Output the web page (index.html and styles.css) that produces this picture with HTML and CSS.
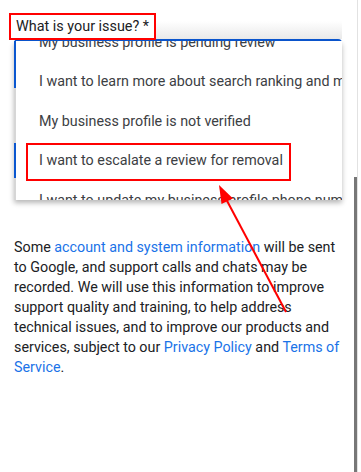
FILE: index.html
```html
<!DOCTYPE html>
<html lang="en">
<head>
    <meta charset="UTF-8">
    <meta name="viewport" content="width=device-width, initial-scale=1.0">
    <title>What is your issue?</title>
    <link rel="stylesheet" href="styles.css">
</head>
<body>
    <div class="page">
        <div class="form">
            <div class="field-label">What is your issue? *</div>
            <div class="select">
                <div class="fade"></div>
                <ul class="menu">
                    <li class="menu-item">My business profile is pending review</li>
                    <li class="menu-item">I want to learn more about search ranking and more</li>
                    <li class="menu-item">My business profile is not verified</li>
                    <li class="menu-item marked">I want to escalate a review for removal</li>
                    <li class="menu-item">I want to update my business profile phone number</li>
                    <li class="menu-item">Something else</li>
                </ul>
            </div>

            <p class="notice">
                Some <a href="#">account and system information</a> will be sent to Google, and support calls and chats may be recorded. We will use this information to improve support quality and training, to help address technical issues, and to improve our products and services, subject to our <a href="#">Privacy Policy</a> and <a href="#">Terms of Service</a>.
            </p>
        </div>

        <!-- page scrollbar -->
        <div class="scrollbar"><div class="thumb"></div></div>

        <!-- annotation arrow -->
        <svg class="arrow" width="361" height="472" viewBox="0 0 361 472">
            <line x1="225" y1="197" x2="286" y2="312" stroke="#ff0000" stroke-width="2"/>
            <polygon points="219,185 221.5,204 233,198.5" fill="#ff0000"/>
        </svg>
    </div>
</body>
</html>
```

FILE: styles.css
```css
body {
    margin: 0;
    background-color: #fff;
    font-family: Roboto, "Liberation Sans", Arial, sans-serif;
    color: #202124;
}
.page {
    position: relative;
    width: 361px;
    height: 472px;
    overflow: hidden;
}
.form {
    padding: 13px 19px 0 14px;
}
.field-label {
    position: relative;
    z-index: 3;
    display: inline-block;
    margin-left: -5px;
    padding: 0 5px;
    border: 2px solid #ff0000;
    background-color: #fff;
    font-size: 14.4px;
    line-height: 23px;
    color: #202124;
}
.select {
    position: relative;
    margin-top: -1px;
    height: 135px;
    border: 2px solid #0b57d0;
    border-radius: 4px;
}
.fade {
    position: absolute;
    left: 0;
    right: -2px;
    top: -20px;
    height: 18px;
    background: linear-gradient(to bottom, rgba(230, 230, 230, 0), #e9e9e9);
}
.menu {
    position: absolute;
    z-index: 2;
    left: -2px;
    right: -2px;
    top: 0;
    height: 159px;
    margin: 0;
    padding: 0 0 0 1px;
    list-style: none;
    overflow: hidden;
    background:
        linear-gradient(to bottom, #0b57d0 0 47px, #d6d6d6 47px 102px, #0b57d0 102px 137px, #d6d6d6 137px) left top / 2px 100% no-repeat,
        #fff;
    box-shadow: 0 3px 5px rgba(0, 0, 0, 0.28);
}
.menu-item {
    position: relative;
    height: 39.5px;
    padding-left: 24px;
    font-size: 14.3px;
    line-height: 39.5px;
    color: #3c4043;
    white-space: nowrap;
}
.menu-item:first-child {
    margin-top: -18.5px;
}
.menu-item.marked::after {
    content: "";
    position: absolute;
    left: 11px;
    top: 2px;
    width: 261px;
    height: 34px;
    border: 2px solid #ff0000;
}
.notice {
    margin: 59px 0 0;
    font-size: 14.3px;
    line-height: 20px;
    color: #202124;
}
.notice a {
    color: #1a73e8;
    text-decoration: none;
}
.scrollbar {
    position: absolute;
    top: 0;
    left: 354px;
    width: 3px;
    height: 100%;
    border-right: 1px solid #e2e2e2;
}
.thumb {
    margin-top: 177px;
    height: 295px;
    background-color: #777;
}
.arrow {
    position: absolute;
    top: 0;
    left: 0;
    z-index: 5;
    pointer-events: none;
}
```
